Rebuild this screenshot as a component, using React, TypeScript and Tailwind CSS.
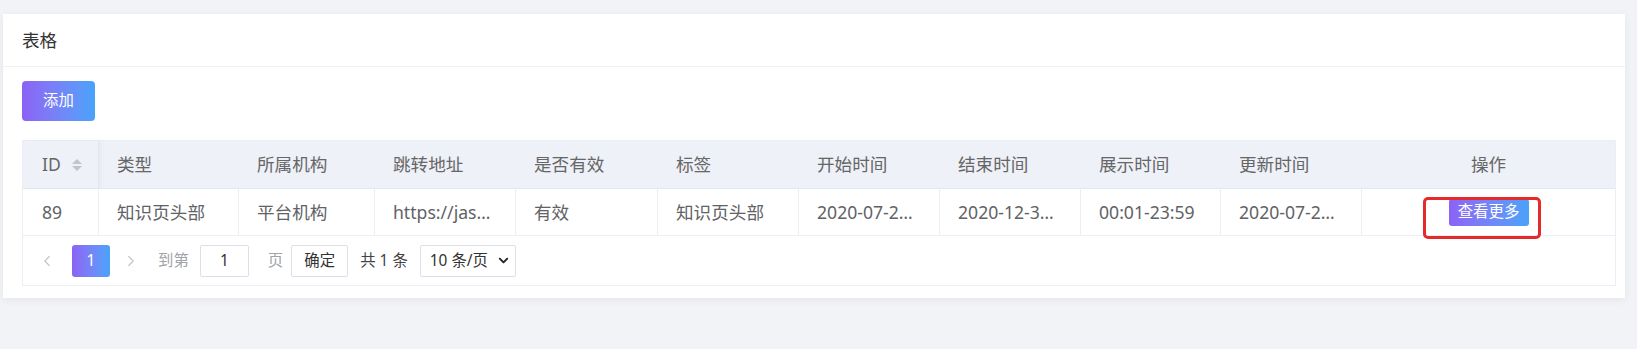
import React from "react";
import { ChevronLeft, ChevronRight, ChevronDown } from "lucide-react";

const FONT = { fontFamily: '"Noto Sans", "Noto Sans CJK SC", sans-serif' };

const headers = ["类型", "所属机构", "跳转地址", "是否有效", "标签", "开始时间", "结束时间", "展示时间", "更新时间"];
const row = ["知识页头部", "平台机构", "https://jas…", "有效", "知识页头部", "2020-07-2…", "2020-12-3…", "00:01-23:59", "2020-07-2…"];

const COLS = "grid-cols-[76px_140px_136px_141px_142px_141px_141px_141px_140px_141px_1fr]";

function SortIcon() {
  return (
    <svg width="12" height="16" viewBox="0 0 12 16" className="ml-[10px]">
      <path d="M6 2 L11 7 L1 7 Z" fill="#c0c4cc" />
      <path d="M6 14 L11 9 L1 9 Z" fill="#c0c4cc" />
    </svg>
  );
}

export default function App() {
  return (
    <div className="min-h-[349px] bg-[#f2f3f7] pt-[14px] pl-[3px] pr-[12px]" style={FONT}>
      <div className="bg-white shadow-[0_2px_8px_rgba(0,0,0,0.06)] pb-[12px]">
        <div className="h-[53px] flex items-center px-[19px] border-b border-[#f0f0f0] text-[17.6px] text-[#333]">
          表格
        </div>
        <div className="pl-[19px] pr-[9px] pt-[14px]">
          <button className="w-[73px] h-[40px] rounded-[4px] bg-gradient-to-r from-[#8b62f5] to-[#47a3fa] text-white text-[15.4px] flex items-center justify-center">
            添加
          </button>
          <div className="mt-[19px] border border-[#ebeef5]">
            <div className={`grid ${COLS} h-[48px] bg-[#eef1f8] border-b border-[#e4e8f0] text-[17.6px] text-[#666]`}>
              <div className="flex items-center pl-[19px] border-r border-[#e2e6ee] shadow-[2px_0_4px_rgba(0,0,0,0.04)]">
                ID
                <SortIcon />
              </div>
              {headers.map((h) => (
                <div key={h} className="flex items-center px-[18px] whitespace-nowrap">
                  {h}
                </div>
              ))}
              <div className="flex items-center justify-center">操作</div>
            </div>
            <div className={`grid ${COLS} h-[47px] border-b border-[#ebeef5] text-[17.6px] text-[#606266]`}>
              <div className="flex items-center pl-[19px] border-r border-[#ebeef5]">89</div>
              {row.map((c, i) => (
                <div key={i} className="flex items-center px-[18px] border-r border-[#ebeef5] whitespace-nowrap overflow-hidden">
                  {c}
                </div>
              ))}
              <div className="relative flex items-center justify-center">
                <button className="h-[27px] w-[80px] rounded-[3px] bg-gradient-to-r from-[#8b62f5] to-[#47a3fa] text-white text-[15.4px] leading-none flex items-center justify-center">
                  查看更多
                </button>
                <div className="absolute left-[61px] top-[8px] w-[118px] h-[42px] border-[3px] border-[#e42a2a] rounded-[5px] pointer-events-none" />
              </div>
            </div>
            <div className="h-[49px] flex items-center pl-[15px] text-[15.4px]">
              <ChevronLeft size={18} strokeWidth={1.5} color="#c0c4cc" />
              <div className="ml-[16px] w-[38px] h-[32px] rounded-[3px] bg-gradient-to-r from-[#8b62f5] to-[#47a3fa] text-white flex items-center justify-center">
                1
              </div>
              <ChevronRight size={18} strokeWidth={1.5} color="#c0c4cc" className="ml-[12px]" />
              <span className="ml-[18px] text-[#a0a3a8]">到第</span>
              <div className="ml-[11px] w-[49px] h-[32px] border border-[#dcdfe6] rounded-[2px] flex items-center justify-center text-[#333]">
                1
              </div>
              <span className="ml-[19px] text-[#a0a3a8]">页</span>
              <div className="ml-[8px] w-[57px] h-[32px] border border-[#dcdfe6] rounded-[2px] flex items-center justify-center text-[#333]">
                确定
              </div>
              <span className="ml-[12px] text-[#444]">共 1 条</span>
              <div className="ml-[12px] w-[96px] h-[32px] border border-[#dcdfe6] rounded-[2px] flex items-center justify-between pl-[9px] pr-[4px] text-[#333]">
                <span>10 条/页</span>
                <ChevronDown size={15} strokeWidth={3} color="#222" />
              </div>
            </div>
          </div>
        </div>
      </div>
    </div>
  );
}
